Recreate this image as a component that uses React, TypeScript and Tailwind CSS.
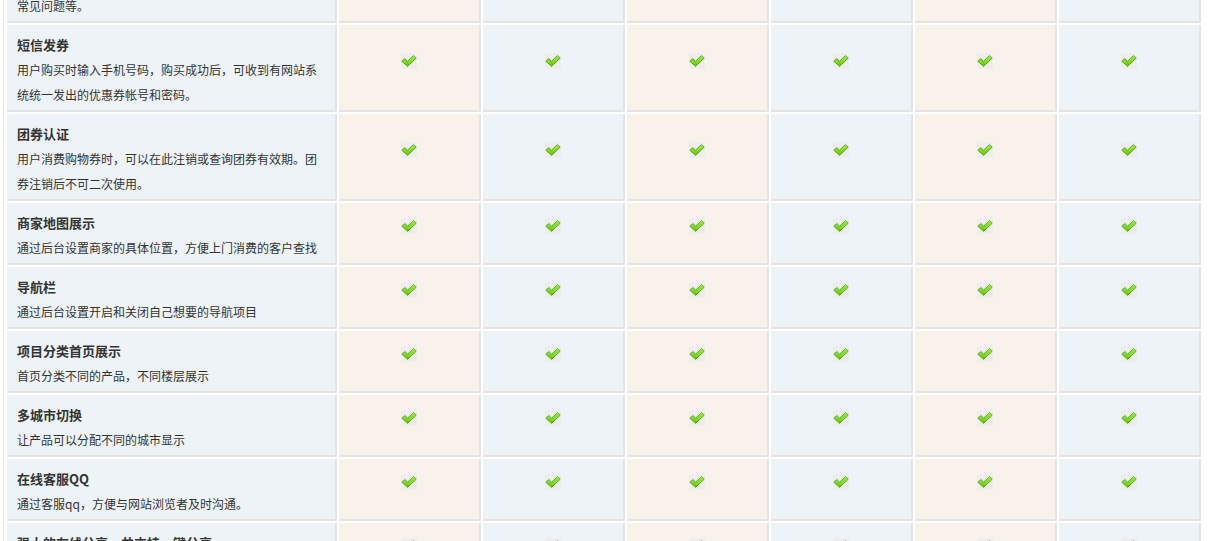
const rows = [
  {
    title: "网站帮助",
    desc: ["可在后台编辑网站帮助信息，如购物流程、配送方式、", "常见问题等。"],
  },
  {
    title: "短信发券",
    desc: ["用户购买时输入手机号码，购买成功后，可收到有网站系", "统统一发出的优惠券帐号和密码。"],
  },
  {
    title: "团券认证",
    desc: ["用户消费购物券时，可以在此注销或查询团券有效期。团", "券注销后不可二次使用。"],
  },
  { title: "商家地图展示", desc: ["通过后台设置商家的具体位置，方便上门消费的客户查找"] },
  { title: "导航栏", desc: ["通过后台设置开启和关闭自己想要的导航项目"] },
  { title: "项目分类首页展示", desc: ["首页分类不同的产品，不同楼层展示"] },
  { title: "多城市切换", desc: ["让产品可以分配不同的城市显示"] },
  { title: "在线客服QQ", desc: ["通过客服qq，方便与网站浏览者及时沟通。"] },
  { title: "强大的在线分享，共支持一键分享", desc: ["支持新浪微博、腾讯微博、QQ空间等多个平台"] },
];

const cols = ["bg-[#f9f2eb]", "bg-[#eef3f8]", "bg-[#f9f2eb]", "bg-[#eef3f8]", "bg-[#f9f2eb]", "bg-[#eef3f8]"];

function Check() {
  return (
    <span className="flex h-4 w-4 items-center justify-center bg-[#ededed]">
      <svg width="16" height="16" viewBox="0 0 16 16">
        <defs>
          <linearGradient id="ck" x1="0" y1="0" x2="0" y2="1">
            <stop offset="0" stopColor="#a8ec4a" />
            <stop offset="1" stopColor="#62c214" />
          </linearGradient>
        </defs>
        <path
          d="M0.8 8.2 L3.8 5.6 L6.6 8.2 L12.4 2.6 L15.2 5.2 L6.6 13.4 Z"
          fill="url(#ck)"
          stroke="#55a80e"
          strokeWidth="0.9"
          strokeLinejoin="round"
        />
      </svg>
    </span>
  );
}

export default function App() {
  return (
    <div className="h-[541px] overflow-hidden bg-white pl-[3px] font-['Noto_Sans_CJK_SC',sans-serif] text-[#333]">
      <div className="-mt-[64px] border-l border-[#e6e6e6] pl-[3px]">
        {rows.map((r) => (
          <div key={r.title} className="mb-[2px] flex gap-[2px]">
            <div className="w-[330px] shrink-0 border-r-2 border-b-2 border-[#e3e3e3] bg-[#eef3f8] pt-[7px] pb-[3px] pl-[10px]">
              <div className="text-[13px] leading-[25px] font-bold">{r.title}</div>
              {r.desc.map((d) => (
                <div key={d} className="text-[12px] leading-[25px]">
                  {d}
                </div>
              ))}
            </div>
            {cols.map((c, i) => (
              <div
                key={i}
                className={`flex w-[142px] shrink-0 items-center justify-center border-r-2 border-b-2 border-[#e3e3e3] pb-[14px] ${c}`}
              >
                <Check />
              </div>
            ))}
          </div>
        ))}
      </div>
    </div>
  );
}
